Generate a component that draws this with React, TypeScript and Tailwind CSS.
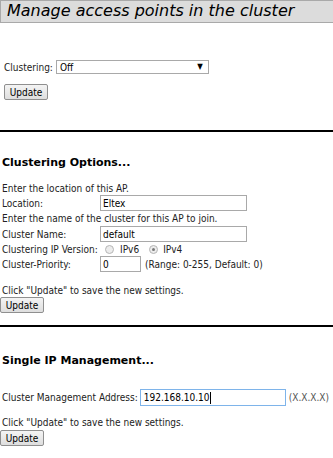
import React from 'react';

const body = "font-['DejaVu_Sans_Condensed','DejaVu_Sans',sans-serif] text-[10px] text-[#222]";
const heading = "font-['DejaVu_Sans',sans-serif] font-bold text-[11px] leading-[14px] text-black";

function Button() {
  return (
    <div className="h-[16px] w-[44px] flex items-center justify-center border border-[#8f8f8f] rounded-[2px] bg-gradient-to-b from-[#f4f4f4] to-[#dedede] text-[10px] text-black">
      Update
    </div>
  );
}

function TextBox({ value, width }: { value: string; width: string }) {
  return (
    <div className={`${width} h-[16px] border border-[#a9a9a9] bg-white flex items-center pl-[2px] text-[10px] text-black`}>
      {value}
    </div>
  );
}

function Radio({ checked }: { checked?: boolean }) {
  return (
    <span className="inline-flex items-center justify-center w-[9px] h-[9px] rounded-full border border-[#b5b5b5] bg-[#ececec]">
      {checked && <span className="w-[3px] h-[3px] rounded-full bg-[#7a7a7a]" />}
    </span>
  );
}

function Rule() {
  return <div className="h-[2px] bg-black" />;
}

export default function App() {
  return (
    <div className={`w-[333px] h-[458px] bg-white overflow-hidden ${body}`}>
      <div className="h-[23px] border border-r-0 border-[#a9a9a9] bg-[#dcdcdc] pl-[6px] font-['DejaVu_Sans',sans-serif] italic text-[16px] leading-[20px] text-black">
        Manage access points in the cluster
      </div>

      <div className="px-[4px]">
        <div className="mt-[37px] flex items-center gap-[3px] h-[14px]">
          <span>Clustering:</span>
          <div className="w-[153px] h-[14px] border border-[#a9a9a9] flex items-center justify-between pl-[3px] pr-[5px] text-black">
            <span>Off</span>
            <span className="text-[8px]">▼</span>
          </div>
        </div>
        <div className="mt-[10px]">
          <Button />
        </div>
      </div>

      <div className="mt-[30px]">
        <Rule />
      </div>

      <div className="px-[2px]">
        <div className={`mt-[24px] ${heading}`}>Clustering Options...</div>
        <div className="mt-[12px] leading-[13px]">Enter the location of this AP.</div>
        <div className="flex items-center h-[16px]">
          <span className="w-[98px]">Location:</span>
          <TextBox value="Eltex" width="w-[147px]" />
        </div>
        <div className="leading-[15px]">Enter the name of the cluster for this AP to join.</div>
        <div className="flex items-center h-[16px]">
          <span className="w-[98px]">Cluster Name:</span>
          <TextBox value="default" width="w-[147px]" />
        </div>
        <div className="flex items-center h-[14px]">
          <span className="w-[103px]">Clustering IP Version:</span>
          <Radio />
          <span className="ml-[6px] mr-[10px]">IPv6</span>
          <Radio checked />
          <span className="ml-[5px]">IPv4</span>
        </div>
        <div className="flex items-center h-[16px]">
          <span className="w-[98px]">Cluster-Priority:</span>
          <TextBox value="0" width="w-[41px]" />
          <span className="ml-[4px]">(Range: 0-255, Default: 0)</span>
        </div>
        <div className="mt-[13px] leading-[12px]">Click "Update" to save the new settings.</div>
      </div>
      <Button />

      <div className="mt-[12px]">
        <Rule />
      </div>

      <div className="px-[2px]">
        <div className={`mt-[27px] ${heading}`}>Single IP Management...</div>
        <div className="mt-[21px] flex items-center h-[17px]">
          <span className="whitespace-nowrap">Cluster Management Address:</span>
          <div className="ml-[2px] w-[146px] shrink-0 h-[17px] border border-[#7eb4ea] bg-white flex items-center pl-[3px] text-[10px] text-black">
            <span>192.168.10.10</span>
            <span className="w-px h-[12px] bg-black" />
          </div>
          <span className="ml-[3px] whitespace-nowrap text-[#555]">(X.X.X.X)</span>
        </div>
        <div className="mt-[11px] leading-[12px]">Click "Update" to save the new settings.</div>
      </div>
      <div className="mt-[1px]">
        <Button />
      </div>
    </div>
  );
}
